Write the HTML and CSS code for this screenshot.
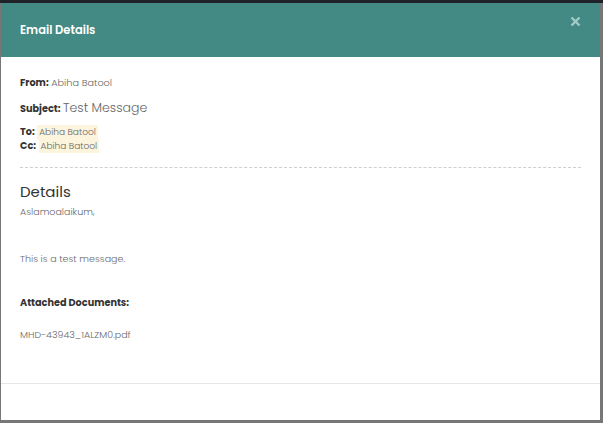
FILE: index.html
```html
<!DOCTYPE html>
<html>
<head>
<meta charset="utf-8">
<link rel="stylesheet" href="styles.css">
</head>
<body>
<div class="backdrop-top"></div>
<div class="modal">
  <div class="modal-header">
    <div class="modal-title">Email Details</div>
    <div class="close">
      <svg width="11" height="11" viewBox="0 0 11 11"><path d="M1.5 1.5 L9.5 9.5 M9.5 1.5 L1.5 9.5" stroke="#a3cbc6" stroke-width="2.4" stroke-linecap="butt"/></svg>
    </div>
  </div>
  <div class="modal-body">
    <div class="row from"><span class="lbl">From:</span> <span class="val">Abiha Batool</span></div>
    <div class="row subject"><span class="lbl">Subject:</span> <span class="subj">Test Message</span></div>
    <div class="row to"><span class="lbl">To:</span> <span class="hl">Abiha Batool</span></div>
    <div class="row cc"><span class="lbl">Cc:</span> <span class="hl">Abiha Batool</span></div>
    <div class="divider"></div>
    <div class="details-title">Details</div>
    <div class="msg msg1">Aslamoalaikum,</div>
    <div class="msg msg2">This is a test message.</div>
    <div class="attach-title">Attached Documents:</div>
    <div class="msg file">MHD-43943_1ALZM0.pdf</div>
  </div>
  <div class="modal-footer"></div>
</div>
</body>
</html>
```
FILE: styles.css
```css
html, body {
  margin: 0;
  padding: 0;
}
body {
  width: 603px;
  height: 423px;
  background: #777777;
  font-family: Poppins, "Open Sans", sans-serif;
  overflow: hidden;
}
.backdrop-top {
  height: 3px;
  background: #1f2228;
}
.modal {
  margin-left: 1px;
  width: 599px;
  height: 417px;
  background: #ffffff;
  display: flex;
  flex-direction: column;
}
.modal-header {
  height: 54px;
  background: #438a84;
  display: flex;
  align-items: center;
  justify-content: space-between;
  padding: 0 19px 0 19px;
  box-sizing: border-box;
}
.modal-title {
  color: #ffffff;
  font-size: 11.5px;
  font-weight: 600;
}
.close {
  align-self: flex-start;
  margin-top: 13px;
  width: 11px;
  height: 11px;
  display: flex;
}
.modal-body {
  flex: 1;
  padding: 19px 19px 0 19px;
  box-sizing: border-box;
}
.row {
  font-size: 9.7px;
  line-height: 14px;
  color: #6b6b6b;
  white-space: nowrap;
}
.lbl {
  font-weight: 700;
  color: #333333;
}
.val {
  font-weight: 300;
  color: #6a6a6a;
  font-size: 9.7px;
}
.subject {
  margin-top: 9px;
  line-height: 18px;
}
.subj {
  font-size: 12.5px;
  font-weight: 300;
  color: #666;
}
.to {
  margin-top: 7px;
}
.hl {
  background: #fcf4dc;
  padding: 1px 2px;
  font-size: 9px;
  font-weight: 300;
  color: #6a6a6a;
}
.divider {
  margin-top: 14px;
  border-top: 1px dashed #cfcfcf;
}
.details-title {
  margin-top: 14px;
  font-size: 15px;
  line-height: 20px;
  color: #333;
  font-weight: 400;
}
.msg {
  font-size: 9.5px;
  line-height: 14px;
  color: #6a6a6a;
  font-weight: 300;
}
.msg1 {
  margin-top: 3px;
}
.msg2 {
  margin-top: 33px;
}
.attach-title {
  margin-top: 30px;
  font-size: 9.7px;
  line-height: 14px;
  font-weight: 700;
  color: #333;
}
.file {
  margin-top: 18px;
}
.modal-footer {
  height: 37px;
  border-top: 1px solid #e6e6e6;
  box-sizing: border-box;
}
```
